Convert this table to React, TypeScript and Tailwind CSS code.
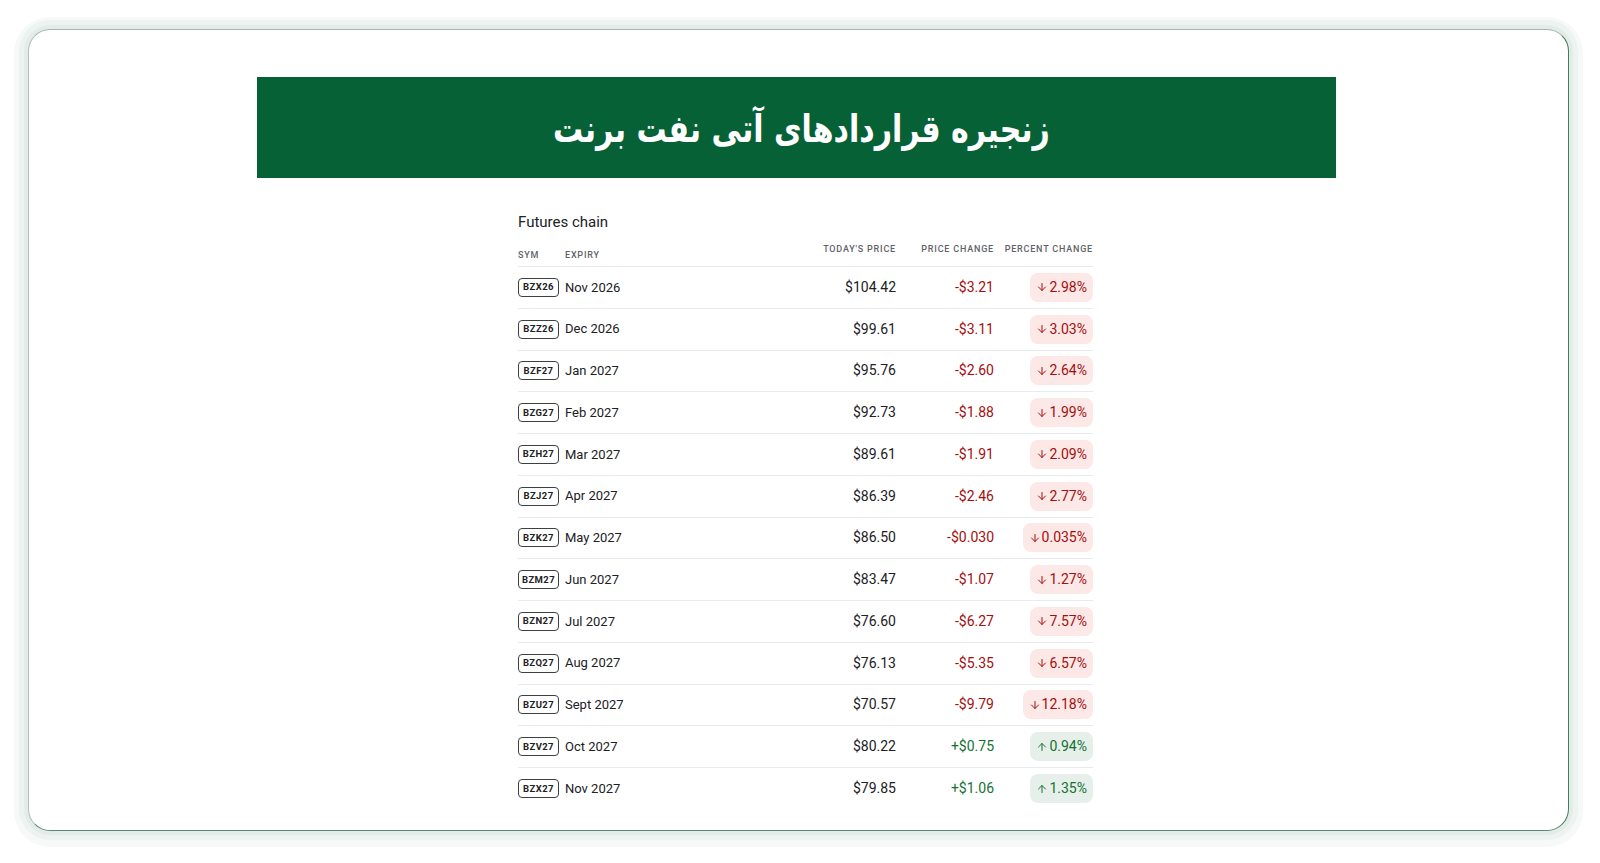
import { ArrowDown, ArrowUp } from 'lucide-react';

type Row = {
  sym: string;
  expiry: string;
  price: string;
  change: string;
  percent: string;
  up?: boolean;
};

const rows: Row[] = [
  { sym: 'BZX26', expiry: 'Nov 2026', price: '$104.42', change: '-$3.21', percent: '2.98%' },
  { sym: 'BZZ26', expiry: 'Dec 2026', price: '$99.61', change: '-$3.11', percent: '3.03%' },
  { sym: 'BZF27', expiry: 'Jan 2027', price: '$95.76', change: '-$2.60', percent: '2.64%' },
  { sym: 'BZG27', expiry: 'Feb 2027', price: '$92.73', change: '-$1.88', percent: '1.99%' },
  { sym: 'BZH27', expiry: 'Mar 2027', price: '$89.61', change: '-$1.91', percent: '2.09%' },
  { sym: 'BZJ27', expiry: 'Apr 2027', price: '$86.39', change: '-$2.46', percent: '2.77%' },
  { sym: 'BZK27', expiry: 'May 2027', price: '$86.50', change: '-$0.030', percent: '0.035%' },
  { sym: 'BZM27', expiry: 'Jun 2027', price: '$83.47', change: '-$1.07', percent: '1.27%' },
  { sym: 'BZN27', expiry: 'Jul 2027', price: '$76.60', change: '-$6.27', percent: '7.57%' },
  { sym: 'BZQ27', expiry: 'Aug 2027', price: '$76.13', change: '-$5.35', percent: '6.57%' },
  { sym: 'BZU27', expiry: 'Sept 2027', price: '$70.57', change: '-$9.79', percent: '12.18%' },
  { sym: 'BZV27', expiry: 'Oct 2027', price: '$80.22', change: '+$0.75', percent: '0.94%', up: true },
  { sym: 'BZX27', expiry: 'Nov 2027', price: '$79.85', change: '+$1.06', percent: '1.35%', up: true },
];

export default function App() {
  return (
    <div className="w-full h-[863px] bg-white pl-[28px] pt-[29px] pr-[31px] pb-[32px] font-['Roboto',sans-serif]">
      <div className="h-full bg-white rounded-[22px] border border-t-[#aab3af] border-l-[#b7c0bc] border-r-[#3f7d5b] border-b-[#5b8a72] shadow-[0_0_0_4px_#e3ece8,0_0_0_9px_#edf3f0,0_2px_0_14px_#f6f9f8]">
        <div className="ml-[228px] mt-[47px] w-[1079px] h-[101px] bg-[#076137] flex items-center justify-center">
          <h1
            dir="rtl"
            className="text-white text-[38px] font-bold leading-none font-['DejaVu_Sans',sans-serif] tracking-[-1px] scale-x-[0.79] translate-x-[5px] translate-y-[1px]"
          >
            زنجیره قراردادهای آتی نفت برنت
          </h1>
        </div>

        <div className="ml-[489px] w-[575px] mt-[34px]">
          <div className="text-[15px] leading-[20px] text-[#202124]">Futures chain</div>

          <div className="flex items-end h-[35px] border-b border-[#e8eaed] text-[9px] font-medium tracking-[0.8px] text-[#5f6368] uppercase">
            <div className="flex-1 flex pb-[4px]">
              <span className="w-[47px]">Sym</span>
              <span>Expiry</span>
            </div>
            <div className="w-[110px] text-right pb-[10px] whitespace-nowrap">Today's price</div>
            <div className="w-[98px] text-right pb-[10px] whitespace-nowrap">Price change</div>
            <div className="w-[99px] text-right pb-[10px] whitespace-nowrap">Percent change</div>
          </div>

          {rows.map((row, index) => (
            <div
              key={row.sym}
              className={`flex items-center h-[41.75px] ${index < rows.length - 1 ? 'border-b border-[#e8eaed]' : ''}`}
            >
              <div className="flex-1 flex items-center">
                <span className="w-[41px] h-[19px] flex items-center justify-center border-[1.5px] border-[#3c4043] rounded-[4px] text-[9.5px] font-bold tracking-[0.4px] text-[#202124]">
                  {row.sym}
                </span>
                <span className="ml-[6px] text-[13px] text-[#202124]">{row.expiry}</span>
              </div>
              <div className="w-[110px] text-right text-[14px] text-[#202124]">{row.price}</div>
              <div
                className={`w-[98px] text-right text-[14px] ${row.up ? 'text-[#137333]' : 'text-[#a50e0e]'}`}
              >
                {row.change}
              </div>
              <div className="w-[99px] flex justify-end">
                <span
                  className={`h-[29px] px-[6px] rounded-[8px] flex items-center gap-[1px] text-[14px] ${
                    row.up ? 'bg-[#e6efe9] text-[#137333]' : 'bg-[#fce8e6] text-[#a50e0e]'
                  }`}
                >
                  {row.up ? (
                    <ArrowUp size={12} strokeWidth={2} />
                  ) : (
                    <ArrowDown size={12} strokeWidth={2} />
                  )}
                  {row.percent}
                </span>
              </div>
            </div>
          ))}
        </div>
      </div>
    </div>
  );
}
